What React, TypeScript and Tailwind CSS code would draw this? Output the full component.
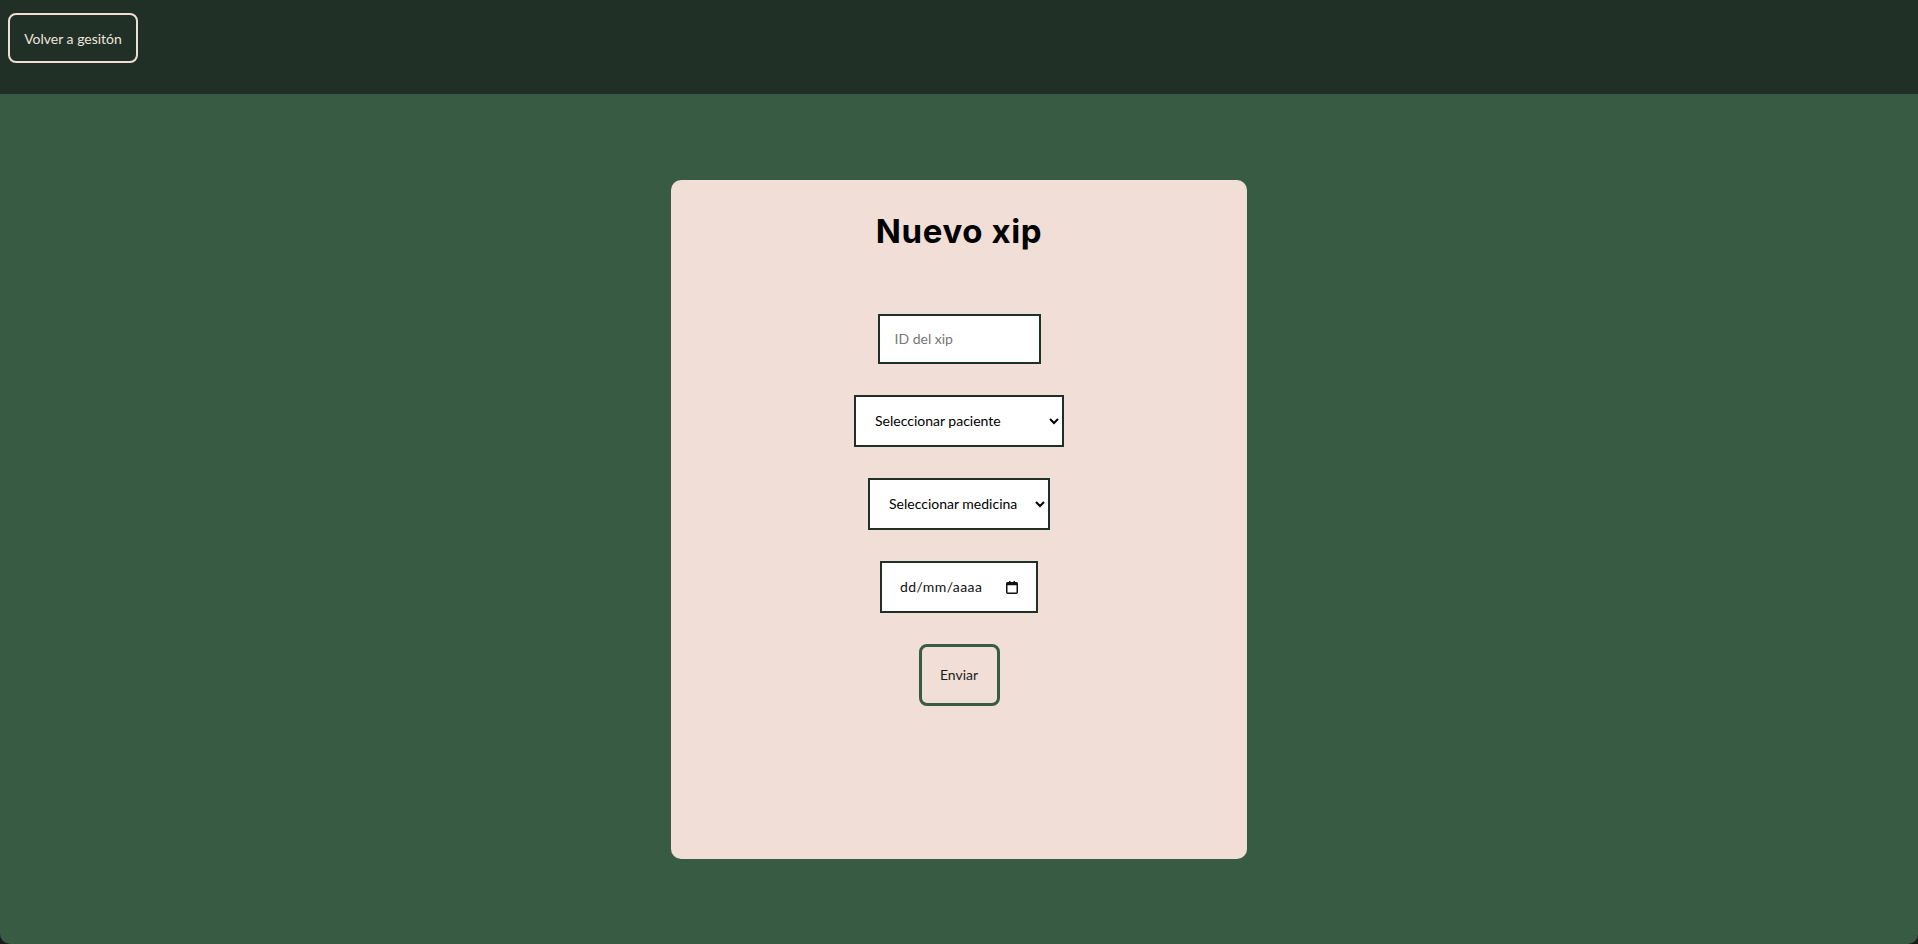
import { useState } from "react"

export default function App() {
    const [xipId, setXipId] = useState("")
    const [paciente, setPaciente] = useState("")
    const [medicina, setMedicina] = useState("")
    const [fecha, setFecha] = useState("")

    return (
        <div className="h-screen bg-[#1b1b1b] font-['Lato',sans-serif]">
            <div className="h-full flex flex-col bg-[#375b43] rounded-b-[10px] overflow-hidden">
                <header className="h-[94px] shrink-0 bg-[#213026] pl-2 pt-[13px]">
                    <button className="h-[50px] w-[130px] border-2 border-[#f0ddd5] rounded-[8px] text-[14px] text-[#f0e4de] hover:cursor-pointer">
                        Volver a gesitón
                    </button>
                </header>
                <main className="flex-1 flex items-center justify-center">
                    <div className="w-[576px] h-[679px] bg-[#f0ded7] rounded-[10px] flex flex-col items-center pt-[32px]">
                        <h1 className="font-['Inter',sans-serif] text-[33px] leading-[38px] font-bold tracking-[0.6px] text-black">
                            Nuevo xip
                        </h1>
                        <form className="mt-[64px] flex flex-col items-center gap-[31px]" onSubmit={e => e.preventDefault()}>
                            <input
                                type="text"
                                placeholder="ID del xip"
                                value={xipId}
                                onChange={e => setXipId(e.target.value)}
                                className="w-[163px] h-[50px] bg-white border-2 border-[#1f3024] px-[15px] text-[14px] text-black placeholder:text-[#767676] outline-none"
                            />
                            <select
                                value={paciente}
                                onChange={e => setPaciente(e.target.value)}
                                className="w-[210px] h-[52px] bg-white border-2 border-[#1f3024] pl-[15px] pr-[2px] text-[14px] text-black outline-none"
                            >
                                <option value="">Seleccionar paciente</option>
                            </select>
                            <select
                                value={medicina}
                                onChange={e => setMedicina(e.target.value)}
                                className="w-[182px] h-[52px] bg-white border-2 border-[#1f3024] pl-[15px] pr-[2px] text-[14px] text-black outline-none"
                            >
                                <option value="">Seleccionar medicina</option>
                            </select>
                            <div className="relative w-[158px] h-[52px]">
                                <input
                                    type="text"
                                    placeholder="dd/mm/aaaa"
                                    value={fecha}
                                    onChange={e => setFecha(e.target.value)}
                                    className="w-full h-full bg-white border-2 border-[#1f3024] pl-[18px] pr-[36px] text-[14px] tracking-[0.4px] text-black placeholder:text-[#111] outline-none"
                                />
                                <svg className="absolute right-[20px] top-[20px] pointer-events-none" width="12" height="13" viewBox="0 0 12 13">
                                    <rect x="0.75" y="1.75" width="10.5" height="10.5" rx="1" fill="none" stroke="#111" strokeWidth="1.5" />
                                    <rect x="0.75" y="1.75" width="10.5" height="2.5" fill="#111" />
                                    <rect x="3" y="0" width="1.5" height="2.5" fill="#111" />
                                    <rect x="7.5" y="0" width="1.5" height="2.5" fill="#111" />
                                </svg>
                            </div>
                            <button type="submit" className="w-[81px] h-[62px] border-[3px] border-[#375b43] rounded-[8px] text-[14px] text-[#1c1c1c] hover:cursor-pointer">
                                Enviar
                            </button>
                        </form>
                    </div>
                </main>
            </div>
        </div>
    )
}
